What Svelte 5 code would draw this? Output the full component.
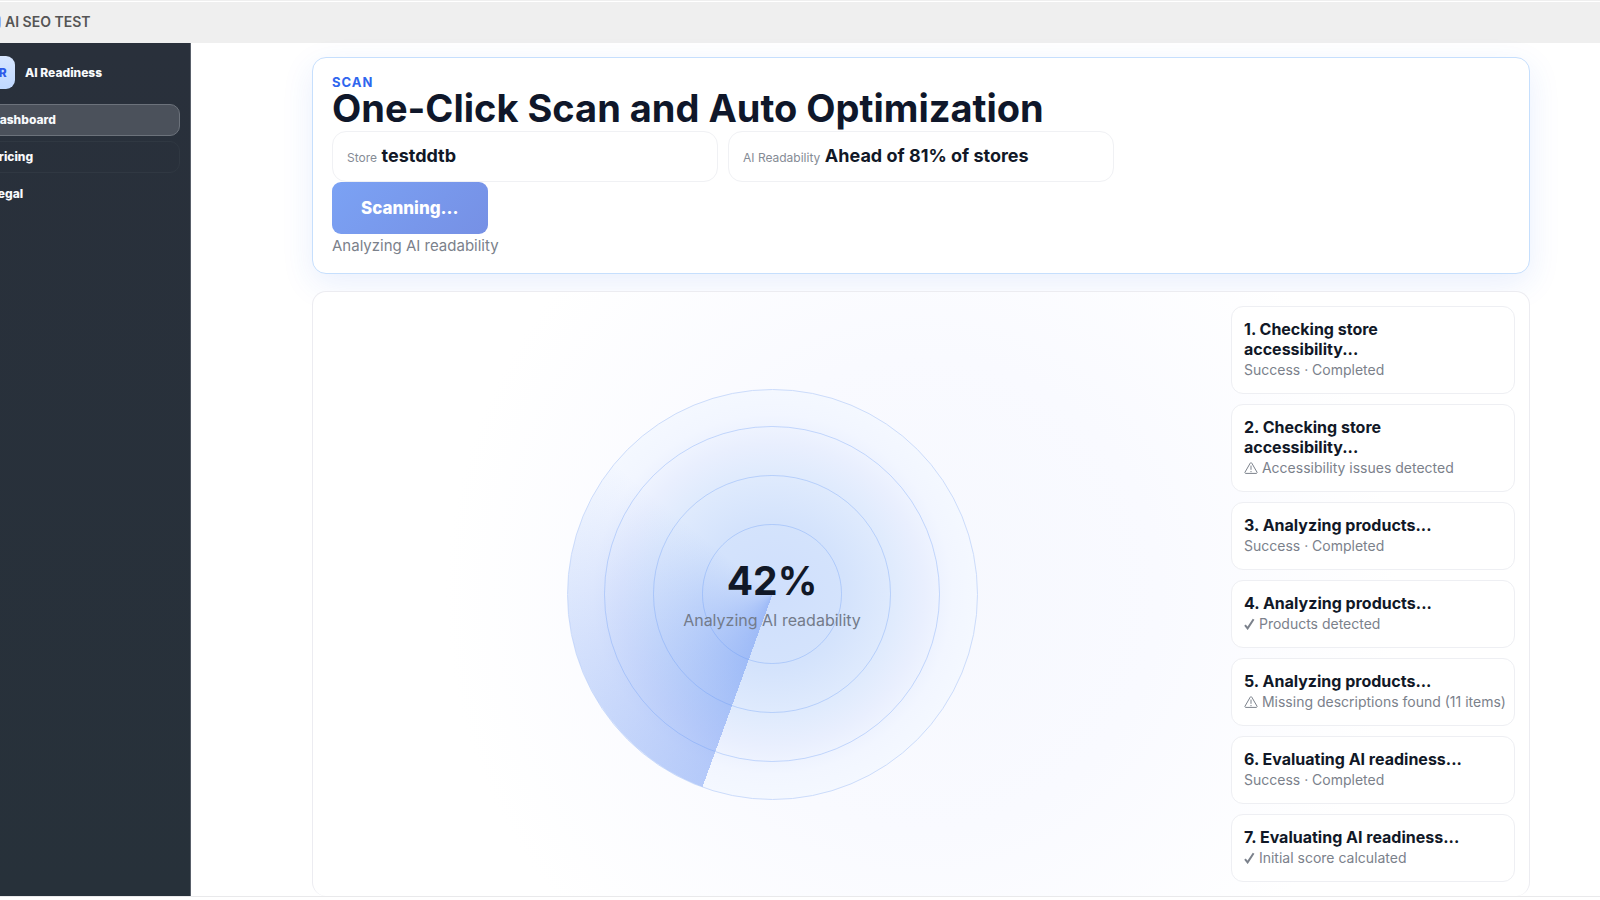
<script>
  let store = "testddtb";
  let progress = 42;
  let status = "Analyzing AI readability";

  const nav = [
    { label: "Dashboard", state: "active" },
    { label: "Pricing", state: "outlined" },
    { label: "Legal", state: "" },
  ];

  const steps = [
    { title: "Checking store accessibility...", note: "Success · Completed" },
    {
      title: "Checking store accessibility...",
      icon: "warn",
      note: "Accessibility issues detected",
    },
    { title: "Analyzing products...", note: "Success · Completed" },
    { title: "Analyzing products...", icon: "check", note: "Products detected" },
    {
      title: "Analyzing products...",
      icon: "warn",
      note: "Missing descriptions found (11 items)",
    },
    { title: "Evaluating AI readiness...", note: "Success · Completed" },
    {
      title: "Evaluating AI readiness...",
      icon: "check",
      note: "Initial score calculated",
    },
  ];
</script>

<div class="app">
  <header class="topbar">
    <span class="favicon"></span>
    <span>AI SEO TEST</span>
  </header>

  <div class="body">
    <aside class="sidebar">
      <div class="brand">
        <span class="logo">AR</span>
        <span>AI Readiness</span>
      </div>
      <nav>
        {#each nav as item}
          <a href="#{item.label.toLowerCase()}" class={item.state}>{item.label}</a>
        {/each}
      </nav>
    </aside>

    <main>
      <section class="hero">
        <div class="eyebrow">SCAN</div>
        <h1>One-Click Scan and Auto Optimization</h1>
        <div class="chips">
          <div class="chip"><span>Store</span> <strong>{store}</strong></div>
          <div class="chip">
            <span>AI Readability</span> <strong>Ahead of 81% of stores</strong>
          </div>
        </div>
        <button disabled>Scanning...</button>
        <p class="status">{status}</p>
      </section>

      <section class="scan">
        <div class="stage">
          <div class="radar">
            <div class="sweep"></div>
            <div class="ring outer"></div>
            <div class="ring middle"></div>
            <div class="ring inner"></div>
            <div class="readout">
              <strong>{progress}%</strong>
              <span>{status}</span>
            </div>
          </div>
        </div>
        <ol class="steps">
          {#each steps as step, i}
            <li>
              <h2>{i + 1}. {step.title}</h2>
              <p>
                {#if step.icon === "warn"}
                  <svg class="warn" viewBox="0 0 14 12" aria-hidden="true">
                    <path d="M6.2 1.2a.9.9 0 0 1 1.6 0l5.2 9a.8.8 0 0 1-.7 1.2H1.7a.8.8 0 0 1-.7-1.2z" />
                    <path d="M7 3.6v4.2M7 9v1.2" />
                  </svg>
                {:else if step.icon === "check"}
                  <svg class="check" viewBox="0 0 11 12" aria-hidden="true">
                    <path d="M1 7.2l2.6 3.2L9.6 1.2" />
                  </svg>
                {/if}
                {step.note}
              </p>
            </li>
          {/each}
        </ol>
      </section>
    </main>
  </div>
</div>

<style>
  :global(body) {
    margin: 0;
    background: #fff;
    overflow-x: hidden;
  }
  .app {
    font-family: Inter, "Liberation Sans", sans-serif;
    color: #111827;
    overflow: hidden;
  }
  h1,
  h2,
  p,
  ol {
    margin: 0;
    padding: 0;
  }
  .topbar {
    display: flex;
    align-items: center;
    gap: 4px;
    height: 43px;
    background: linear-gradient(#efefef 1px, #fff 1px, #fff 2px, #efefef 2px);
    color: #555;
    font-size: 14px;
    font-weight: 600;
  }
  .favicon {
    width: 14px;
    height: 14px;
    margin-left: -13px;
    border-radius: 4px;
    background: #8bb8f8;
  }
  .body {
    display: flex;
    border-bottom: 1px solid #e9e9eb;
  }
  .sidebar {
    box-sizing: border-box;
    flex: none;
    width: 191px;
    padding: 13px 10px 0 0;
    background: linear-gradient(#29303b, #27313a);
    border-right: 1px solid #59606a;
    color: #f8fafc;
    font-size: 12px;
    font-weight: 800;
  }
  /* the sidebar is scrolled partly past the left edge */
  .brand,
  nav {
    margin-left: -19px;
  }
  .brand {
    display: flex;
    align-items: center;
    gap: 10px;
    margin-bottom: 15px;
  }
  .logo {
    box-sizing: border-box;
    width: 34px;
    height: 33px;
    line-height: 33px;
    text-align: center;
    border-radius: 9px;
    background: linear-gradient(#d7e6ff, #bfd8ff);
    color: #2f5be8;
  }
  nav {
    display: flex;
    flex-direction: column;
    gap: 5px;
  }
  nav a {
    padding: 0 9px;
    line-height: 30px;
    border: 1px solid transparent;
    border-radius: 10px;
    color: inherit;
    text-decoration: none;
  }
  nav a.active {
    border-color: #6c727b;
    background: #4b515b;
  }
  nav a.outlined {
    border-color: #303842;
  }
  main {
    flex: 1;
    min-width: 0;
    display: flex;
    flex-direction: column;
    gap: 17px;
    padding: 14px 70px 0 121px;
  }
  .hero {
    padding: 16px 19px;
    border: 1px solid #c6dffd;
    border-radius: 14px;
    background: #fff;
    box-shadow: 0 10px 32px rgba(37, 99, 235, 0.1);
  }
  .eyebrow {
    line-height: 16px;
    font-size: 13px;
    font-weight: 700;
    letter-spacing: 1px;
    color: #2f66ee;
  }
  h1 {
    margin-bottom: 4px;
    line-height: 37px;
    font-size: 38px;
    font-weight: 700;
    color: #0f172a;
  }
  .chips {
    display: grid;
    grid-template-columns: 1fr 1fr;
    gap: 10px;
    max-width: 782px;
  }
  .chip {
    padding: 0 14px;
    line-height: 47px;
    border: 1px solid #f0f1f4;
    border-radius: 14px;
  }
  .chip span {
    font-size: 12px;
    color: #858b95;
  }
  .chip strong {
    font-size: 18px;
    font-weight: 700;
  }
  button {
    display: block;
    height: 52px;
    padding: 0 29px;
    border: 0;
    border-radius: 9px;
    background: linear-gradient(135deg, #7ba2f4, #7690e5);
    color: #fff;
    font-family: inherit;
    font-size: 17px;
    font-weight: 800;
  }
  .status {
    line-height: 23px;
    font-size: 15px;
    color: #7b818b;
  }
  .scan {
    display: flex;
    gap: 14px;
    padding: 14px;
    border: 1px solid #ececf1;
    border-bottom: 0;
    border-radius: 14px;
    background: radial-gradient(circle at 50% 50%, #f6f8fe 0, #f9faff 35%, #fff 70%) #fff;
  }
  .stage {
    flex: 1;
    display: grid;
    place-items: center;
  }
  .radar {
    position: relative;
    box-sizing: border-box;
    width: 411px;
    aspect-ratio: 1;
    border: 1px solid #ccdcfb;
    border-radius: 50%;
    background: radial-gradient(circle closest-side, #cfdffc 0, #d4e3fc 36%, #e0ebfd 60%, #e9effe 74%, #f2f6ff 88%, #f4f8ff 100%);
  }
  .sweep,
  .ring {
    position: absolute;
    border-radius: 50%;
  }
  .sweep {
    inset: 0;
    background: conic-gradient(from 200deg, rgba(59, 113, 238, 0.34), rgba(59, 113, 238, 0) 110deg);
  }
  .ring {
    border: 1px solid rgba(96, 150, 245, 0.32);
  }
  .outer {
    inset: 9%;
  }
  .middle {
    inset: 21%;
  }
  .inner {
    inset: 33%;
  }
  .readout {
    position: absolute;
    inset: 0;
    display: flex;
    flex-direction: column;
    align-items: center;
    justify-content: center;
    gap: 3px;
  }
  .readout strong {
    line-height: 48px;
    font-size: 39px;
    font-weight: 700;
  }
  .readout span {
    line-height: 24px;
    font-size: 16px;
    color: #737b8a;
  }
  .steps {
    box-sizing: border-box;
    width: 284px;
    display: flex;
    flex-direction: column;
    gap: 10px;
    list-style: none;
  }
  .steps li {
    padding: 12px;
    border: 1px solid #eeeff3;
    border-radius: 12px;
    background: #fff;
  }
  .steps h2 {
    padding-right: 14px;
    line-height: 20px;
    font-size: 16px;
    font-weight: 700;
  }
  .steps p {
    line-height: 22px;
    font-size: 14px;
    color: #7b818b;
    white-space: nowrap;
  }
  .steps svg {
    height: 12px;
    fill: none;
    stroke: currentColor;
    vertical-align: -1px;
  }
  .warn {
    width: 14px;
  }
  .check {
    width: 11px;
    stroke-width: 2;
  }
</style>
